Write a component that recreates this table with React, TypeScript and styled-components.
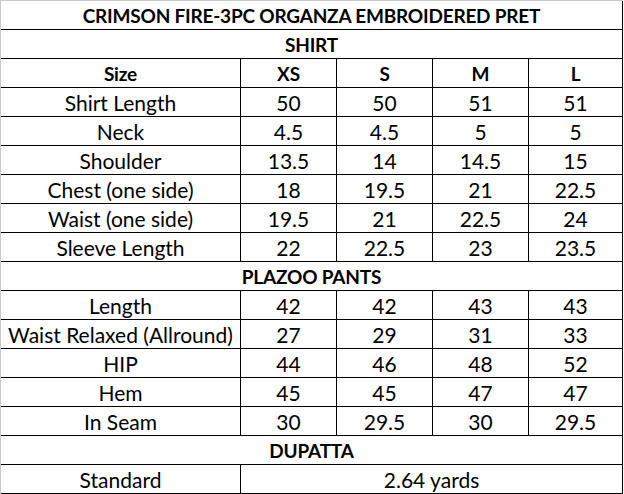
import React from "react";
import styled, { createGlobalStyle } from "styled-components";

const GlobalStyle = createGlobalStyle`
  html, body { margin: 0; padding: 0; background: #ffffff; }
  body { font-family: Lato, "Open Sans", "Liberation Sans", sans-serif; }
`;

const Sheet = styled.div`
  display: grid;
  grid-template-columns: 239px 95px 95px 95px 93px;
  grid-auto-rows: 28px;
  gap: 1px;
  width: max-content;
  background: #000;
  border-top: 1px solid #c9c9c9;
  border-left: 1px solid #c9c9c9;
  padding: 0 1px 1px 0;
`;

const Cell = styled.div<{ $span?: number; $bold?: boolean }>`
  grid-column: span ${(p) => p.$span ?? 1};
  background: #fff;
  display: flex;
  align-items: center;
  justify-content: center;
  font-size: ${(p) => (p.$bold ? "19px" : "21px")};
  letter-spacing: ${(p) => (p.$bold ? "-0.2px" : "0")};
  font-weight: ${(p) => (p.$bold ? 700 : 400)};
  color: #000;
  white-space: nowrap;
  line-height: 1;
  padding-top: 1px;
`;

type Row = [string, string, string, string, string];

const shirt: Row[] = [
  ["Shirt Length", "50", "50", "51", "51"],
  ["Neck", "4.5", "4.5", "5", "5"],
  ["Shoulder", "13.5", "14", "14.5", "15"],
  ["Chest (one side)", "18", "19.5", "21", "22.5"],
  ["Waist (one side)", "19.5", "21", "22.5", "24"],
  ["Sleeve Length", "22", "22.5", "23", "23.5"],
];

const pants: Row[] = [
  ["Length", "42", "42", "43", "43"],
  ["Waist Relaxed (Allround)", "27", "29", "31", "33"],
  ["HIP", "44", "46", "48", "52"],
  ["Hem", "45", "45", "47", "47"],
  ["In Seam", "30", "29.5", "30", "29.5"],
];

const DataRows = ({ rows }: { rows: Row[] }) => (
  <>
    {rows.map((r) =>
      r.map((v, i) => <Cell key={r[0] + i}>{v}</Cell>)
    )}
  </>
);

export default function App() {
  return (
    <>
      <GlobalStyle />
      <Sheet>
        <Cell $span={5} $bold>
          CRIMSON FIRE-3PC ORGANZA EMBROIDERED PRET
        </Cell>
        <Cell $span={5} $bold>
          SHIRT
        </Cell>
        {["Size", "XS", "S", "M", "L"].map((h) => (
          <Cell key={h} $bold>
            {h}
          </Cell>
        ))}
        <DataRows rows={shirt} />
        <Cell $span={5} $bold>
          PLAZOO PANTS
        </Cell>
        <DataRows rows={pants} />
        <Cell $span={5} $bold>
          DUPATTA
        </Cell>
        <Cell>Standard</Cell>
        <Cell $span={4}>2.64 yards</Cell>
      </Sheet>
    </>
  );
}
